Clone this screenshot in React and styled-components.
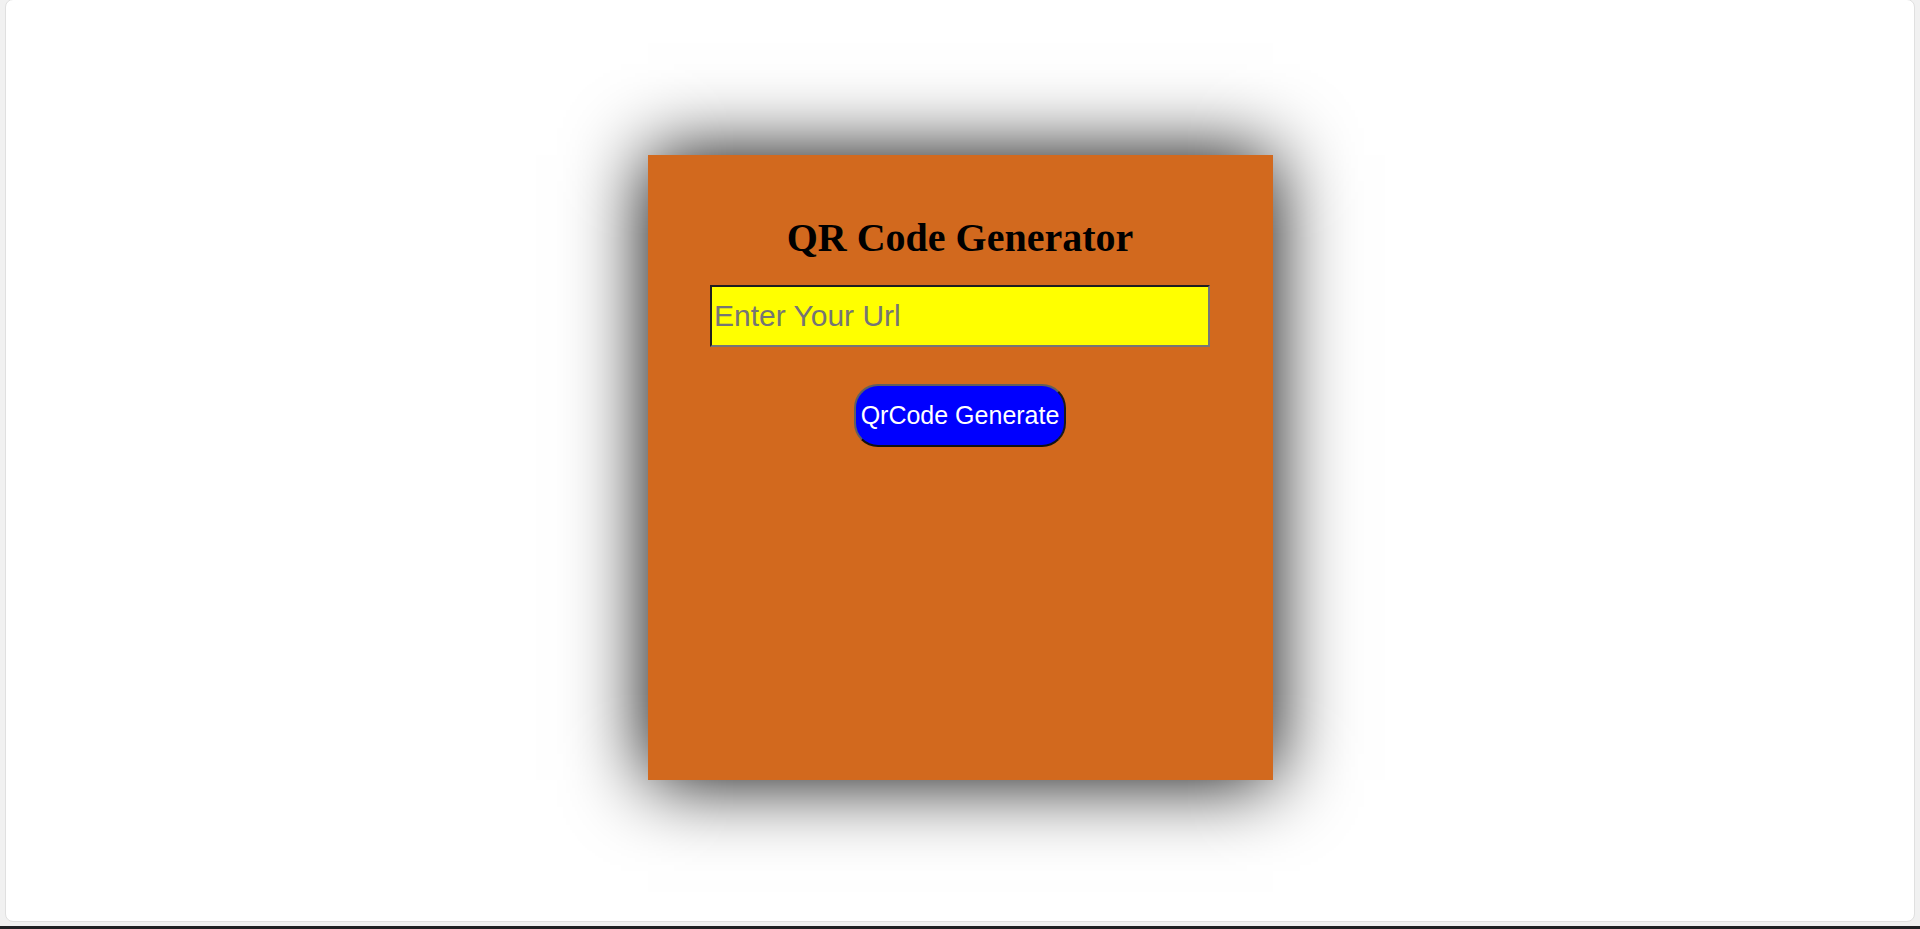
import styled, { createGlobalStyle } from "styled-components";

const GlobalStyle = createGlobalStyle`
  html, body {
    margin: 0;
    padding: 0;
    background: #f1f1f1;
  }
  * {
    box-sizing: border-box;
  }
`;

const Screen = styled.div`
  height: 929px;
  display: flex;
  flex-direction: column;
  overflow: hidden;
`;

const Panel = styled.main`
  height: 923px;
  margin: -1px 5px 0;
  background: #ffffff;
  border: 1px solid #e0e0e0;
  border-radius: 8px;
  display: flex;
  justify-content: center;
  padding-top: 155px;
`;

const BottomBar = styled.div`
  margin-top: 4px;
  height: 3px;
  background: #202124;
`;

const Card = styled.section`
  width: 625px;
  height: 625px;
  background: #d2691e;
  box-shadow: 0 0 75px #000;
  display: flex;
  flex-direction: column;
  align-items: center;
  padding-top: 60px;
`;

const Title = styled.h2`
  margin: 0;
  font-family: "Liberation Serif", "Times New Roman", serif;
  font-size: 40px;
  font-weight: 700;
  line-height: 46px;
  color: #000;
`;

const UrlInput = styled.input`
  margin-top: 24px;
  width: 500px;
  height: 62px;
  padding: 0 2px;
  background: #ffff00;
  border: 2px solid;
  border-color: #1f1f1f #767676 #767676 #1f1f1f;
  font-family: "Liberation Sans", Arial, sans-serif;
  font-size: 30px;
  color: #000;
  outline: none;

  &::placeholder {
    color: #757575;
  }
`;

const GenerateButton = styled.button`
  margin-top: 37px;
  height: 63px;
  padding: 0 5px;
  background: #0000ff;
  color: #ffffff;
  border: 2px solid;
  border-color: #5f5f5f #1a1a1a #111111 #5f5f5f;
  border-radius: 24px;
  font-family: "Liberation Sans", Arial, sans-serif;
  font-size: 25px;
  cursor: pointer;
`;

const App = () => {
  return (
    <>
      <GlobalStyle />
      <Screen>
        <Panel>
          <Card>
            <Title>QR Code Generator</Title>
            <UrlInput type="text" placeholder="Enter Your Url" />
            <GenerateButton>QrCode Generate</GenerateButton>
          </Card>
        </Panel>
        <BottomBar />
      </Screen>
    </>
  );
};

export default App;
